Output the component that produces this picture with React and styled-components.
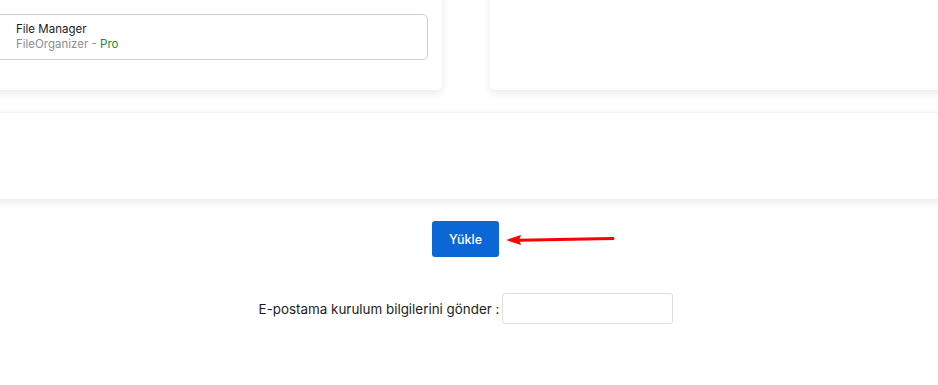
import React from "react";
import styled, { createGlobalStyle } from "styled-components";

const Global = createGlobalStyle`
  html, body { margin: 0; padding: 0; background: #fff; }
  body { font-family: "Inter", "Noto Sans", sans-serif; color: #212529; overflow: hidden; }
`;

const Page = styled.div`
  width: 938px;
  height: 385px;
  overflow: hidden;
`;

const TopRow = styled.div`
  display: grid;
  grid-template-columns: 462px 1fr;
  column-gap: 48px;
  margin: -30px -20px 0 -20px;
`;

const Card = styled.div`
  background: #fff;
  border-radius: 5px;
  box-shadow: 0 3px 8px rgba(0, 0, 0, 0.09);
`;

const LeftCard = styled(Card)`
  padding: 44px 14px 30px 15px;
`;

const AppBox = styled.div`
  border: 1px solid #cfcfcf;
  border-radius: 5px;
  padding: 7px 0 0 20px;
  box-sizing: border-box;
  height: 46px;
`;

const AppTitle = styled.div`
  font-size: 11.5px;
  line-height: 15px;
  color: #1c1c1c;
`;

const AppSub = styled.div`
  font-size: 11.5px;
  line-height: 15px;
  color: #8a8f98;
`;

const Pro = styled.span`
  color: #1e8a3a;
`;

const WideCard = styled(Card)`
  margin: 22px -20px 0 -20px;
  height: 87px;
  border-radius: 0;
  border-top: 1px solid #f2f2f2;
  box-sizing: border-box;
`;

const ButtonRow = styled.div`
  position: relative;
  display: flex;
  justify-content: center;
  padding-right: 7px;
  margin-top: 22px;
`;

const UploadButton = styled.button`
  width: 67px;
  height: 36px;
  border: none;
  border-radius: 3px;
  background: #0b66d6;
  color: #fff;
  font-family: "Inter", "Noto Sans", sans-serif;
  font-size: 12.5px;
  font-weight: 500;
  cursor: pointer;
`;

const Arrow = styled.svg`
  position: absolute;
  left: 504px;
  top: 13px;
`;

const EmailRow = styled.div`
  display: flex;
  justify-content: center;
  align-items: center;
  gap: 3px;
  padding-right: 6px;
  margin-top: 36px;
`;

const Label = styled.label`
  font-size: 13.4px;
  color: #1c1c1c;
`;

const EmailInput = styled.input`
  width: 171px;
  height: 31px;
  box-sizing: border-box;
  border: 1px solid #dedede;
  border-radius: 3px;
  outline: none;
`;

export default function App() {
  return (
    <Page>
      <Global />
      <TopRow>
        <LeftCard>
          <AppBox>
            <AppTitle>File Manager</AppTitle>
            <AppSub>
              FileOrganizer - <Pro>Pro</Pro>
            </AppSub>
          </AppBox>
        </LeftCard>
        <Card />
      </TopRow>
      <WideCard />
      <ButtonRow>
        <UploadButton>Yükle</UploadButton>
        <Arrow width="112" height="12" viewBox="0 0 112 12">
          <polygon points="2,6 17,1 15,6 17,11" fill="#ff0000" />
          <path d="M15 6.2 L109 4.5" stroke="#ff0000" strokeWidth="3" strokeLinecap="round" />
        </Arrow>
      </ButtonRow>
      <EmailRow>
        <Label>E-postama kurulum bilgilerini gönder :</Label>
        <EmailInput type="text" />
      </EmailRow>
    </Page>
  );
}
